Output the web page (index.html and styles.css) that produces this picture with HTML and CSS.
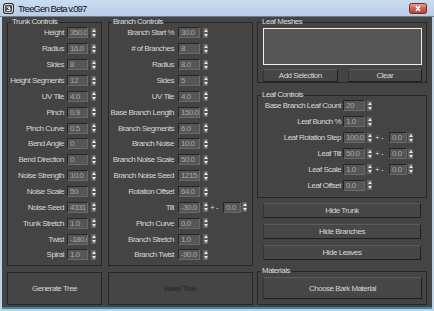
FILE: index.html
```html
<!DOCTYPE html>
<html lang="en">
  <head>
  <meta charset="utf-8">
  <title>TreeGen Beta v.097</title>
  <link rel="stylesheet" href="styles.css">
  </head>
  <body>
    <div class="window">
      <div class="titlebar">
        <svg class="app-icon" width="11" height="11" viewBox="0 0 11 11">
          <rect x="0.5" y="0.5" width="10" height="10" rx="2" fill="#4e4e4e" stroke="#2a2a2a"/>
          <rect x="1.5" y="1.5" width="8" height="8" rx="1.5" fill="none" stroke="#d8d8d8"/>
          <path d="M3.5 4 H7 L5.2 5.6 H7 V7.5 H3.5" fill="none" stroke="#ffffff" stroke-width="1"/>
        </svg>
        <span class="title">TreeGen Beta v.097</span>
        <svg class="close" width="18" height="11" viewBox="0 0 18 11">
          <defs>
            <linearGradient id="red" x1="0" y1="0" x2="0" y2="1">
              <stop offset="0" stop-color="#e9a493"/>
              <stop offset="0.5" stop-color="#d2604a"/>
              <stop offset="1" stop-color="#c23d25"/>
            </linearGradient>
          </defs>
          <rect x="0.5" y="0.5" width="17" height="10" rx="2" fill="url(#red)" stroke="#7c2a1c"/>
          <path d="M7 3 L11 8 M11 3 L7 8" stroke="#ffffff" stroke-width="1.6"/>
        </svg>
      </div>

      <div class="client">
        <!-- trunk -->
        <div class="col col-trunk">
          <fieldset class="group trunk">
            <legend>Trunk Controls</legend>
            <div class="rows">
              <div class="row"><label>Height</label><span class="field">350.0</span><span class="spin"></span></div>
              <div class="row"><label>Radius</label><span class="field">16.0</span><span class="spin"></span></div>
              <div class="row"><label>Sides</label><span class="field">8</span><span class="spin"></span></div>
              <div class="row"><label>Height Segments</label><span class="field">12</span><span class="spin"></span></div>
              <div class="row"><label>UV Tile</label><span class="field">4.0</span><span class="spin"></span></div>
              <div class="row"><label>Pinch</label><span class="field">0.9</span><span class="spin"></span></div>
              <div class="row"><label>Pinch Curve</label><span class="field">0.5</span><span class="spin"></span></div>
              <div class="row"><label>Bend Angle</label><span class="field">0</span><span class="spin"></span></div>
              <div class="row"><label>Bend Direction</label><span class="field">0</span><span class="spin"></span></div>
              <div class="row"><label>Noise Strength</label><span class="field">10.0</span><span class="spin"></span></div>
              <div class="row"><label>Noise Scale</label><span class="field">50</span><span class="spin"></span></div>
              <div class="row"><label>Noise Seed</label><span class="field">4331</span><span class="spin"></span></div>
              <div class="row"><label>Trunk Stretch</label><span class="field">1.0</span><span class="spin"></span></div>
              <div class="row"><label>Twist</label><span class="field">-180.0</span><span class="spin"></span></div>
              <div class="row"><label>Spiral</label><span class="field">1.0</span><span class="spin"></span></div>
            </div>
          </fieldset>
          <div class="bigbtn">Generate Tree</div>
        </div>

        <!-- branches -->
        <div class="col col-branch">
          <fieldset class="group branch">
            <legend>Branch Controls</legend>
            <div class="rows">
              <div class="row"><label>Branch Start %</label><span class="field">30.0</span><span class="spin"></span></div>
              <div class="row"><label># of Branches</label><span class="field">8</span><span class="spin"></span></div>
              <div class="row"><label>Radius</label><span class="field">8.0</span><span class="spin"></span></div>
              <div class="row"><label>Sides</label><span class="field">5</span><span class="spin"></span></div>
              <div class="row"><label>UV Tile</label><span class="field">4.0</span><span class="spin"></span></div>
              <div class="row"><label>Base Branch Length</label><span class="field">150.0</span><span class="spin"></span></div>
              <div class="row"><label>Branch Segments</label><span class="field">6.0</span><span class="spin"></span></div>
              <div class="row"><label>Branch Noise</label><span class="field">10.0</span><span class="spin"></span></div>
              <div class="row"><label>Branch Noise Scale</label><span class="field">50.0</span><span class="spin"></span></div>
              <div class="row"><label>Branch Noise Seed</label><span class="field">1215.0</span><span class="spin"></span></div>
              <div class="row"><label>Rotation Offset</label><span class="field">64.0</span><span class="spin"></span></div>
              <div class="row"><label>Tilt</label><span class="field">-30.0</span><span class="spin"></span><span class="pm">+ -</span><span class="field sm">0.0</span><span class="spin tight"></span></div>
              <div class="row"><label>Pinch Curve</label><span class="field">0.0</span><span class="spin"></span></div>
              <div class="row"><label>Branch Stretch</label><span class="field">1.0</span><span class="spin"></span></div>
              <div class="row"><label>Branch Twist</label><span class="field">-90.0</span><span class="spin"></span></div>
            </div>
          </fieldset>
          <div class="bigbtn disabled">Bake Tree</div>
        </div>

        <!-- leaves -->
        <div class="col col-leaf">
          <fieldset class="group meshes">
            <legend>Leaf Meshes</legend>
            <div class="listbox"></div>
            <div class="btn-pair">
              <div class="btn">Add Selection</div>
              <div class="btn">Clear</div>
            </div>
          </fieldset>

          <fieldset class="group leaf">
            <legend>Leaf Controls</legend>
            <div class="rows">
              <div class="row"><label>Base Branch Leaf Count</label><span class="field">20</span><span class="spin"></span></div>
              <div class="row"><label>Leaf Bunch %</label><span class="field">1.0</span><span class="spin"></span></div>
              <div class="row"><label>Leaf Rotation Step</label><span class="field">100.0</span><span class="spin"></span><span class="pm">+ -</span><span class="field sm">0.0</span><span class="spin tight"></span></div>
              <div class="row"><label>Leaf Tilt</label><span class="field">50.0</span><span class="spin"></span><span class="pm">+ -</span><span class="field sm">0.0</span><span class="spin tight"></span></div>
              <div class="row"><label>Leaf Scale</label><span class="field">1.0</span><span class="spin"></span><span class="pm">+ -</span><span class="field sm">0.0</span><span class="spin tight"></span></div>
              <div class="row"><label>Leaf Offset</label><span class="field">0.0</span><span class="spin"></span></div>
            </div>
          </fieldset>

          <div class="btn wide">Hide Trunk</div>
          <div class="btn wide">Hide Branches</div>
          <div class="btn wide">Hide Leaves</div>

          <fieldset class="group materials">
            <legend>Materials</legend>
            <div class="btn bark">Choose Bark Material</div>
          </fieldset>
        </div>
      </div>
    </div>
  </body>
</html>
```

FILE: styles.css
```css
* {
  margin: 0;
  padding: 0;
  box-sizing: border-box;
}

body {
  width: 434px;
  height: 311px;
  overflow: hidden;
  font-family: 'Liberation Sans', Arial, sans-serif;
  font-size: 8px;
  letter-spacing: -0.5px;
  color: #d6d6d6;
  background: #bcd3ea;
}

.window {
  width: 434px;
  height: 311px;
  display: flex;
  flex-direction: column;
}

/* title bar */
.titlebar {
  height: 17px;
  display: flex;
  align-items: center;
  padding: 0 7px 0 3px;
  background: linear-gradient(#cadcf0, #b7cee7);
  border-bottom: 1px solid #6b7f95;
}

.title {
  margin-left: 4px;
  font-size: 9.5px;
  letter-spacing: -0.9px;
  color: #141414;
}

.close {
  margin-left: auto;
  margin-top: 1px;
}

/* client area */
.client {
  height: 292px;
  margin: 0 2px;
  padding: 1px 5px 2px;
  display: flex;
  background: #444444;
  border-bottom: 2px solid #3c8b9c;
}

.col {
  display: flex;
  flex-direction: column;
}

.col-trunk {
  width: 95px;
}

.col-branch {
  width: 145px;
  margin: 0 4px 0 6px;
}

.col-leaf {
  width: 170px;
}

/* group boxes */
.group {
  border: 1px solid #272727;
  min-width: 0;
}

.group legend {
  margin-left: 3px;
  padding: 0 1px;
  line-height: 8px;
  color: #dadada;
}

.trunk,
.branch {
  flex: 1;
}

.rows {
  margin-top: -1px;
}

.row {
  display: flex;
  align-items: center;
  height: 15.86px;
}

.row label {
  flex: none;
  text-align: right;
  white-space: nowrap;
}

.trunk label {
  width: 56px;
}

.branch label {
  width: 65px;
}

.leaf label {
  width: 83px;
}

.field {
  flex: none;
  width: 21px;
  height: 11px;
  margin-left: 3px;
  padding-left: 2px;
  line-height: 9px;
  white-space: nowrap;
  overflow: hidden;
  color: #a6a6a6;
  background: #565656;
  border: 1px solid;
  border-color: #262626 #6a6a6a #6a6a6a #262626;
}

.branch .field {
  width: 22px;
  margin-left: 4px;
}

.leaf .field {
  width: 22px;
  margin-left: 2px;
}

.branch .field.sm,
.leaf .field.sm {
  width: 18px;
  margin-left: 3px;
}

.leaf .field.sm {
  margin-left: 4px;
}

.spin {
  flex: none;
  width: 5px;
  height: 10px;
  margin-left: 3px;
  display: flex;
  flex-direction: column;
  align-items: center;
  justify-content: space-around;
  background: #5f5f5f;
}

.leaf .spin {
  margin-left: 2px;
}

.spin.tight,
.leaf .spin.tight {
  margin-left: 1px;
}

.spin::before,
.spin::after {
  content: "";
  border-left: 2px solid transparent;
  border-right: 2px solid transparent;
}

.spin::before {
  border-bottom: 3px solid #e4e4e4;
}

.spin::after {
  border-top: 3px solid #e4e4e4;
}

.pm {
  width: 10px;
  margin-left: 2px;
  white-space: nowrap;
}

.leaf .pm {
  margin-left: 3px;
}

/* buttons */
.bigbtn {
  height: 33px;
  margin-top: 6px;
  display: flex;
  align-items: center;
  justify-content: center;
  border: 1px solid #272727;
  background: #454545;
}

.bigbtn.disabled {
  color: #262626;
}

.btn {
  display: flex;
  align-items: center;
  justify-content: center;
  background: #474747;
  border: 1px solid;
  border-color: #5a5a5a #1f1f1f #1f1f1f #333333;
}

.meshes {
  height: 65px;
}

.listbox {
  height: 37px;
  margin: 2px 4px 0 5px;
  background: #565656;
  border: 1px solid #f0f0f0;
}

.btn-pair {
  height: 13px;
  margin: 4px 4px 0 5px;
  display: grid;
  grid-template-columns: 1fr 1fr;
  gap: 10px;
}

.leaf {
  height: 107px;
  margin-top: 8px;
}

.btn.wide {
  height: 15px;
  margin: 6px 6px 0;
}

.leaf + .btn.wide {
  margin-top: 5px;
}

.materials {
  flex: 1;
  margin-top: 7px;
}

.btn.bark {
  height: 22px;
  margin: 2px 4px 0 5px;
}
```
